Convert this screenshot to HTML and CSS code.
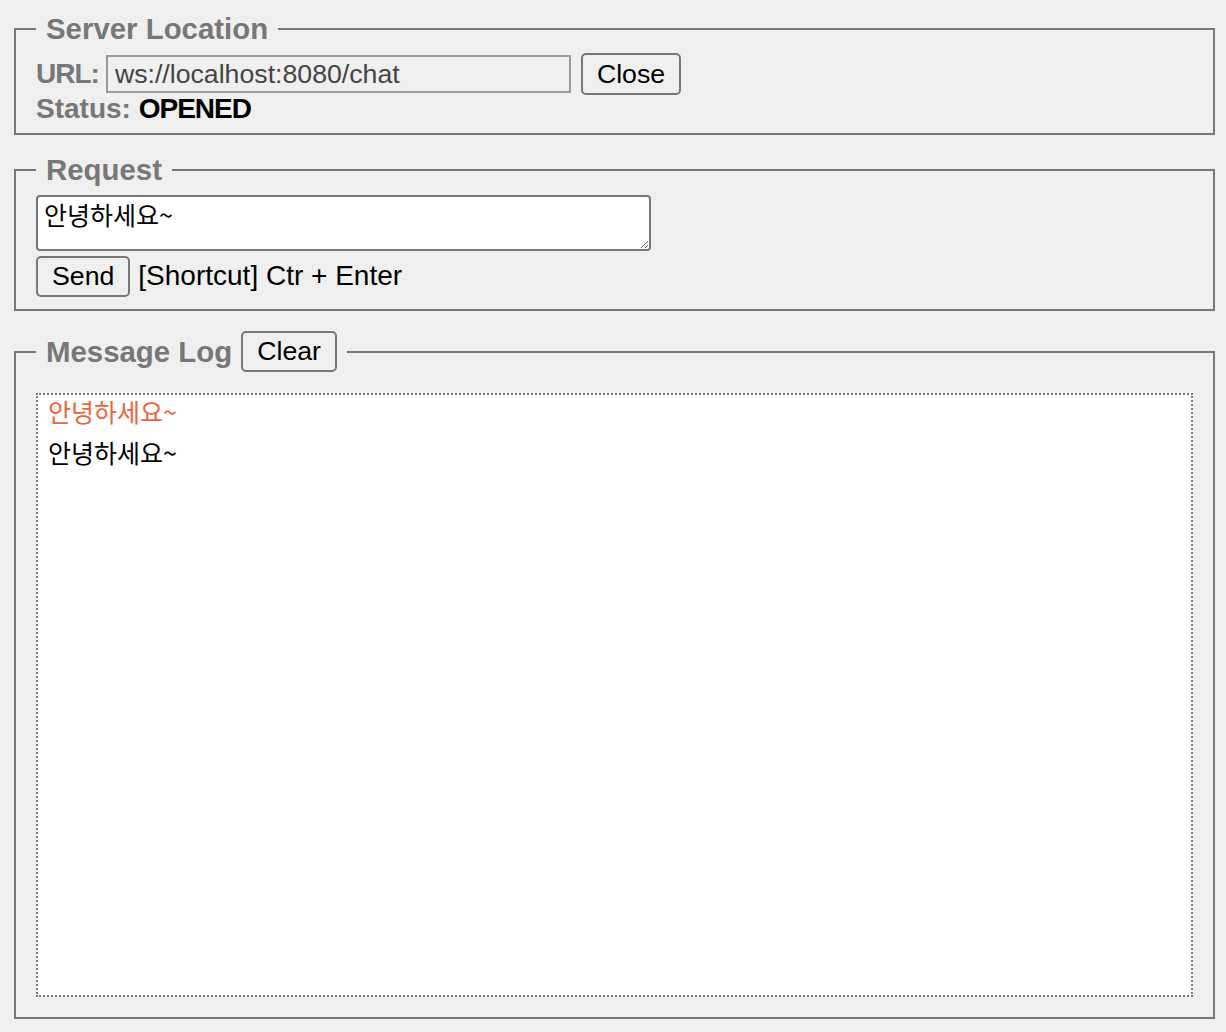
FILE: index.html
```html
<!DOCTYPE html>
<html lang="ko">
<head>
  <meta charset="UTF-8" />
  <meta name="viewport" content="width=device-width, initial-scale=1.0"/>
  <title>WebSocket Chat Test</title>
  <link rel="stylesheet" href="styles.css">
</head>
<body>

<fieldset class="panel panel-server">
  <legend>Server Location</legend>
  <div class="url-row">
    <label class="field-label" for="url">URL:</label>
    <input type="text" id="url" class="url-input" value="ws://localhost:8080/chat" readonly />
    <button type="button" class="btn" id="connect">Close</button>
  </div>
  <div class="status-row">
    <span class="field-label">Status:</span> <strong id="status" class="status-value">OPENED</strong>
  </div>
</fieldset>

<fieldset class="panel">
  <legend>Request</legend>
  <textarea id="message" class="message-input">안녕하세요~</textarea>
  <div class="send-row">
    <button type="button" class="btn" id="send">Send</button>
    <span class="hint">[Shortcut] Ctr + Enter</span>
  </div>
</fieldset>

<fieldset class="panel panel-log">
  <legend class="log-legend">
    <span>Message Log</span>
    <button type="button" class="btn" id="clear">Clear</button>
  </legend>
  <div id="log" class="log">
    <div class="log-line sent">안녕하세요~</div>
    <div class="log-line">안녕하세요~</div>
  </div>
</fieldset>

</body>
</html>
```

FILE: styles.css
```css
html {
  background: #efefef;
}

body {
  margin: 0;
  padding-top: 13px;
  font-family: "Liberation Sans", "Noto Sans CJK KR", sans-serif;
  font-size: 28px;
  color: #000;
}

.panel {
  margin: 0 11px 20px 14px;
  padding: 8px 20px 8px 20px;
  border: 2px solid #777;
  min-width: 0;
}

legend {
  padding: 0 10px;
  font-size: 29.4px;
  line-height: 32px;
  font-weight: bold;
  color: #777;
}

.field-label {
  font-weight: bold;
  color: #777;
}

.btn {
  font-family: "Liberation Sans", sans-serif;
  font-size: 26.7px;
  height: 42px;
  padding: 0 14px;
  background: #efefef;
  color: #000;
  border: 2px solid #777;
  border-radius: 5px;
}

/* server location */
.panel-server {
  margin-bottom: 19px;
}

.url-row {
  display: flex;
  align-items: baseline;
}

.url-row .field-label {
  letter-spacing: -1px;
}

.url-input {
  margin: 0 10px 0 7px;
  width: 465px;
  height: 38px;
  box-sizing: border-box;
  padding: 0 7px;
  border: 2px solid #9a9a9a;
  background: #efefef;
  color: #444;
  font-family: "Liberation Sans", sans-serif;
  font-size: 26.7px;
}

.status-row {
  line-height: 28px;
  padding-bottom: 2px;
}

.status-value {
  letter-spacing: -1px;
}

/* request */
.message-input {
  display: block;
  margin-top: 1px;
  width: 615px;
  height: 56px;
  box-sizing: border-box;
  padding: 1px 6px;
  border: 2px solid #777;
  border-radius: 4px;
  background: #fff;
  font-family: "Noto Sans CJK KR", sans-serif;
  font-size: 25px;
  line-height: 32px;
}

.send-row {
  display: flex;
  align-items: baseline;
  gap: 8px;
  margin-top: 5px;
  padding-bottom: 4px;
}

.send-row .btn {
  height: 41px;
}

/* message log */
.panel-log {
  padding: 0 20px 20px 20px;
}

.log-legend {
  display: flex;
  align-items: center;
  gap: 9px;
  line-height: 41px;
}

.log-legend .btn {
  height: 41px;
}

.log {
  margin-top: 21px;
  height: 604px;
  box-sizing: border-box;
  padding: 0 10px;
  border: 2px dotted #777;
  background: #fff;
  overflow-y: auto;
}

.log-line {
  font-family: "Noto Sans CJK KR", sans-serif;
  font-size: 25px;
  line-height: 41px;
  position: relative;
  top: -4px;
}

.log-line.sent {
  color: #f0643c;
}
```
